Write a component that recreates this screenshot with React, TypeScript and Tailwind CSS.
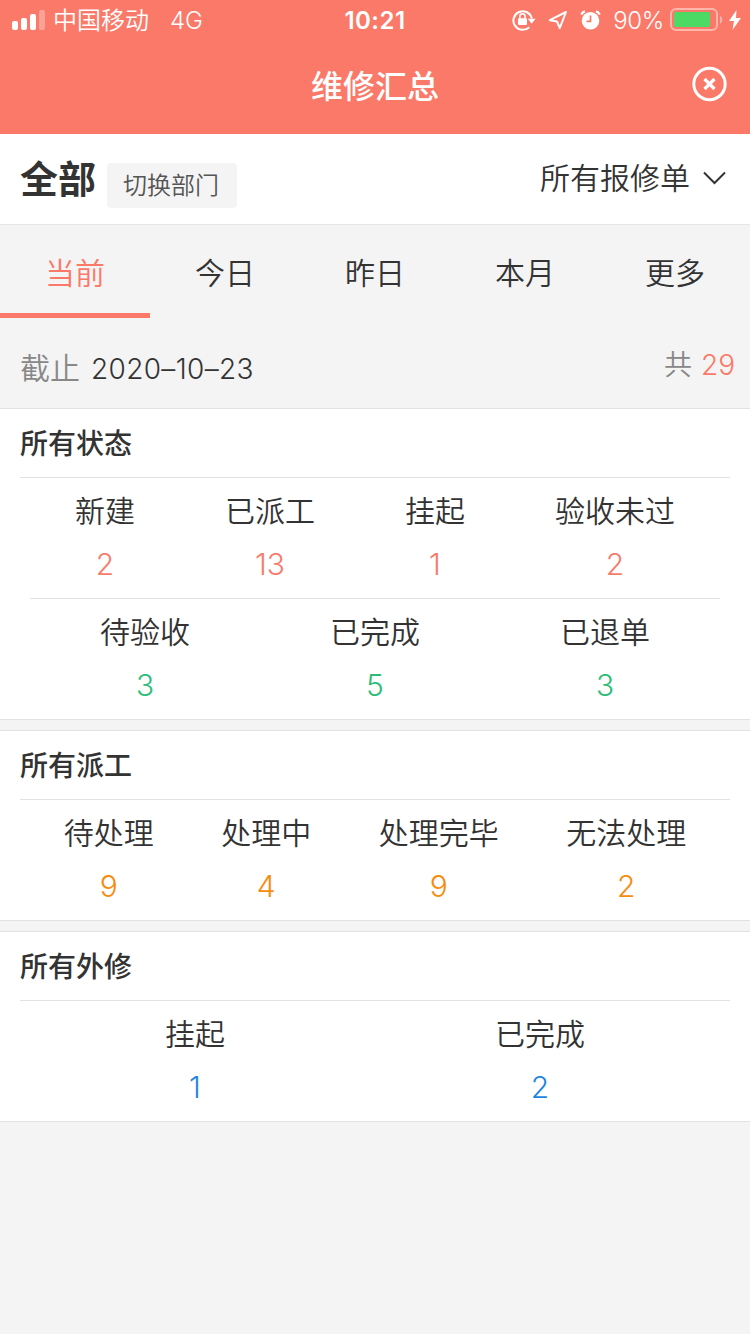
const SECTIONS = [
  {
    title: "所有状态",
    rows: [
      {
        color: "text-[#f77b6b]",
        items: [
          {label: "新建", value: 2},
          {label: "已派工", value: 13},
          {label: "挂起", value: 1},
          {label: "验收未过", value: 2}
        ]
      },
      {
        color: "text-[#2bbd77]",
        items: [
          {label: "待验收", value: 3},
          {label: "已完成", value: 5},
          {label: "已退单", value: 3}
        ]
      }
    ]
  },
  {
    title: "所有派工",
    rows: [
      {
        color: "text-[#f78c0c]",
        items: [
          {label: "待处理", value: 9},
          {label: "处理中", value: 4},
          {label: "处理完毕", value: 9},
          {label: "无法处理", value: 2}
        ]
      }
    ]
  },
  {
    title: "所有外修",
    rows: [
      {
        color: "text-[#1d86e0]",
        items: [
          {label: "挂起", value: 1},
          {label: "已完成", value: 2}
        ]
      }
    ]
  }
];

const TABS = ["当前", "今日", "昨日", "本月", "更多"];

type Section = (typeof SECTIONS)[number];

function StatusBar() {
  return (
    <div className="grid h-10 grid-cols-3 items-center text-2xl leading-8">
      <div className="flex items-center pl-3">
        <svg width="34" height="20" viewBox="0 0 34 20" fill="currentColor">
          <rect x="0" y="11" width="6" height="9" rx="2" />
          <rect x="9" y="8" width="6" height="12" rx="2" />
          <rect x="18" y="4" width="6" height="16" rx="2" />
          <rect x="27" y="0" width="6" height="20" rx="2" opacity="0.3" />
        </svg>
        <span className="mt-[2px] ml-[7px] font-[350]">中国移动</span>
        <span className="mt-[2px] ml-[21px] font-[350]">4G</span>
      </div>
      <div className="mt-[2px] text-center font-semibold tracking-[0.5px]">10:21</div>
      <div className="flex items-center justify-end pr-[9px]">
        <svg width="24" height="22" viewBox="0 0 24 22" fill="none" stroke="currentColor" strokeWidth="2">
          <path d="M17.200 18.200A9.300 9.300 0 1 1 19.800 9.500" />
          <path d="M15.800 9.800h7.700l-3.800 5z" fill="currentColor" stroke="none" />
          <rect x="6" y="9.200" width="9" height="6.800" rx="1" fill="currentColor" stroke="none" />
          <path d="M7.900 10V7.400a2.600 2.600 0 0 1 5.200 0V10" strokeWidth="1.600" />
        </svg>
        <svg className="ml-3" width="20" height="20" viewBox="0 0 20 20" fill="none" stroke="currentColor" strokeWidth="2" strokeLinejoin="round">
          <path d="M18 2 1.800 10.200l7.200 1.300 2.800 6.500z" />
        </svg>
        <svg className="ml-3" width="21" height="20" viewBox="0 0 21 20">
          <circle cx="10.500" cy="10.800" r="8.800" fill="currentColor" />
          <path d="M1.400 4.600A5 5 0 0 1 5 1.400M19.600 4.600A5 5 0 0 0 16 1.400" fill="none" stroke="currentColor" strokeWidth="2.400" />
          <path d="M10.500 5.400v6H6.600" fill="none" stroke="#fb7968" strokeWidth="1.700" />
        </svg>
        <span className="mt-[2px] ml-3 font-[350] tracking-[-0.3px]">90%</span>
        <svg className="ml-[6px]" width="53" height="24" viewBox="0 0 53 24">
          <rect x="1" y="1" width="46" height="21" rx="5" fill="none" stroke="#fff" strokeWidth="2" opacity="0.45" />
          <rect x="4" y="4" width="36" height="15" rx="1.500" fill="#4cd964" />
          <path d="M50 8c3 1 3 6.500 0 7.500z" fill="#fff" opacity="0.45" />
        </svg>
        <svg className="ml-[6px]" width="12" height="20" viewBox="0 0 12 20" fill="currentColor">
          <path d="M7.500 0 0 11h5L3.500 20 12 8H7z" />
        </svg>
      </div>
    </div>
  );
}

function Header() {
  return (
    <header className="h-[134px] bg-[#fb7968] text-white">
      <StatusBar />
      <div className="grid h-[94px] grid-cols-3 items-center">
        <h1 className="col-start-2 text-center text-[32px] leading-[94px] font-medium">维修汇总</h1>
        <button type="button" aria-label="关闭" className="mr-[23px] mb-[6px] justify-self-end">
          <svg width="36" height="36" viewBox="0 0 36 36" fill="none" stroke="currentColor" strokeWidth="3">
            <circle cx="18.500" cy="18" r="15.700" />
            <path d="m13.500 13 10 10M23.500 13l-10 10" strokeWidth="3.200" />
          </svg>
        </button>
      </div>
    </header>
  );
}

function SummarySection({section}: {section: Section}) {
  return (
    <section className="border-y border-[#e2e2e2] bg-white">
      <h2 className="h-[68px] pl-5 text-[28px] leading-[70px] font-medium">{section.title}</h2>
      <div className="mx-5 border-t border-[#e2e2e2] px-2.5">
        {section.rows.map((row, index) => (
          <div
            key={index}
            className={index > 0 ? "flex border-t border-[#e2e2e2]" : "flex"}
          >
            {row.items.map((item) => (
              <div key={item.label} className="flex h-[120px] flex-auto flex-col items-center pt-[7px] text-3xl font-[350]">
                <span className="h-[53px] leading-[52px]">{item.label}</span>
                <span className={`leading-[52px] ${row.color}`}>{item.value}</span>
              </div>
            ))}
          </div>
        ))}
      </div>
    </section>
  );
}

export default function App() {
  return (
    <main className="min-h-[1334px] w-[750px] bg-[#f4f4f4] font-['Inter','Noto_Sans_CJK_SC',sans-serif] text-[#333]">
      <Header />

      <div className="flex h-[91px] border-b border-[#e5e5e5] bg-white pl-5">
        <span className="text-[38px] leading-[90px] font-bold">全部</span>
        <button type="button" className="mt-[29px] ml-[11px] h-[45px] w-[130px] rounded bg-[#f4f4f4] pr-0.5 text-2xl leading-[46px] font-[350] text-[#555]">
          切换部门
        </button>
        <button type="button" className="mr-6 ml-auto flex h-[87px] items-center gap-[13px] text-3xl font-[350]">
          所有报修单
          <svg width="23" height="14" viewBox="0 0 23 14" fill="none" stroke="currentColor" strokeWidth="2">
            <path d="m1 1.500 10.500 10.500L22 1.500" />
          </svg>
        </button>
      </div>

      <nav className="grid h-[93px] grid-cols-5 font-[350]">
        {TABS.map((tab, index) => (
          <button
            key={tab}
            type="button"
            className={
              index === 0
                ? "border-b-[5px] border-[#fb7968] pt-[9px] text-3xl leading-[79px] text-[#fb7968]"
                : "border-b-[5px] border-transparent pt-[9px] text-3xl leading-[79px]"
            }
          >
            {tab}
          </button>
        ))}
      </nav>

      <div className="flex h-[90px] justify-between pr-[15px] pl-5 font-[350]">
        <div className="flex gap-[11px] leading-[103px]">
          <span className="text-3xl leading-[101px] text-[#888]">截止</span>
          <span className="text-[28px] tracking-[0.35px]">2020–10–23</span>
        </div>
        <div className="flex gap-[9px] text-[28px] leading-[94px]">
          <span className="text-[#888]">共</span>
          <span className="text-[#fb7968]">29</span>
        </div>
      </div>

      <div className="grid gap-2.5">
        {SECTIONS.map((section) => (
          <SummarySection key={section.title} section={section} />
        ))}
      </div>
    </main>
  );
}
